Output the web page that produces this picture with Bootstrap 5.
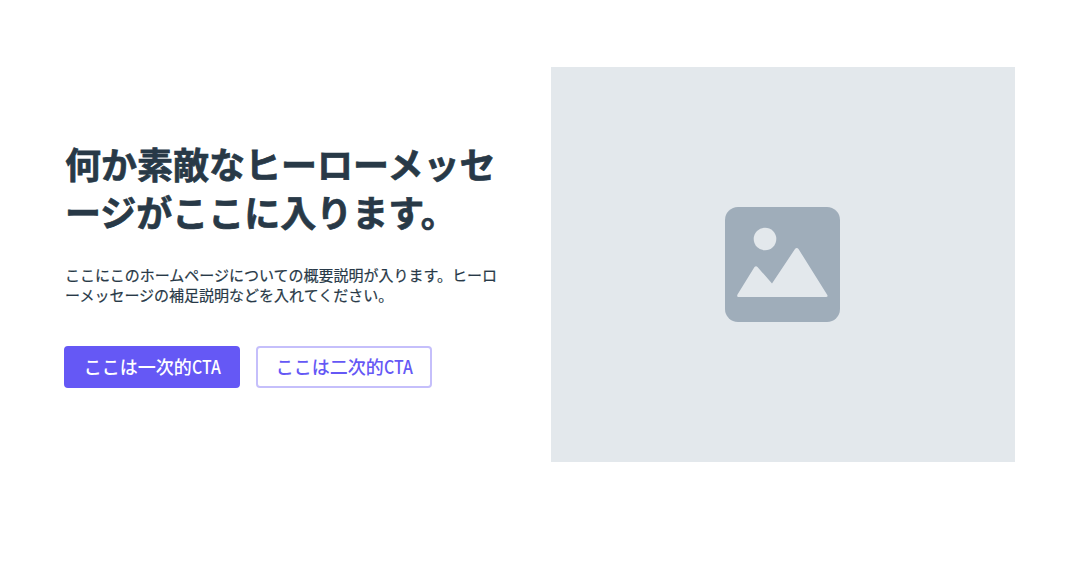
<!DOCTYPE html>
<html lang="ja">
<head>
  <meta charset="UTF-8" />
  <meta name="viewport" content="width=device-width, initial-scale=1.0"/>
  <title>ホーム</title>
  <link href="https://cdn.jsdelivr.net/npm/bootstrap@5.3.0/dist/css/bootstrap.min.css" rel="stylesheet">
  <style>
    body {
      font-family: "Noto Sans CJK JP", sans-serif;
      color: #283947;
    }
    .hero {
      padding: 67px 65px 0;
      gap: 54px;
    }
    .hero-copy {
      width: 432px;
      padding-top: 72px;
    }
    .hero-title {
      font-size: 36px;
      line-height: 48px;
      margin-bottom: 30px;
      -webkit-text-stroke: 0.7px currentColor;
    }
    .hero-text {
      font-size: 15px;
      line-height: 20px;
      margin-bottom: 41px;
      -webkit-text-stroke: 0.2px currentColor;
    }
    .hero-actions {
      margin-left: -1px;
    }
    .btn-cta {
      --bs-btn-border-width: 2px;
      --bs-btn-border-radius: 4px;
      width: 176px;
      height: 42px;
      padding-bottom: 8px;
      font-size: 18px;
      line-height: 22px;
      font-weight: 500;
    }
    .btn-cta-main {
      --bs-btn-color: #fff;
      --bs-btn-bg: #6558f5;
      --bs-btn-border-color: #6558f5;
    }
    .btn-cta-sub {
      --bs-btn-color: #6558f5;
      --bs-btn-border-color: #c5bffb;
    }
    /* narrower latin letters beside the kanji */
    .latin {
      display: inline-block;
      margin-right: -4px;
      transform: scaleX(0.88);
      transform-origin: left;
    }
    .hero-image {
      width: 464px;
      height: 395px;
      padding-right: 1px;
      background: #e3e8ec;
    }
  </style>
</head>
<body>
  <main class="hero d-flex align-items-start">
    <div class="hero-copy flex-shrink-0">
      <h1 class="hero-title fw-bold">何か素敵なヒーローメッセ<br>ージがここに入ります。</h1>
      <p class="hero-text">ここにこのホームページについての概要説明が入ります。ヒーロ<br>ーメッセージの補足説明などを入れてください。</p>
      <div class="hero-actions d-flex gap-3">
        <button type="button" class="btn btn-cta btn-cta-main px-0">ここは一次的<span class="latin">CTA</span></button>
        <button type="button" class="btn btn-cta btn-cta-sub px-0">ここは二次的<span class="latin">CTA</span></button>
      </div>
    </div>
    <div class="hero-image d-flex align-items-center justify-content-center flex-shrink-0">
      <svg width="115" height="115" viewBox="0 0 115 115" aria-hidden="true">
        <rect width="115" height="115" rx="13" fill="#9fadba"/>
        <circle cx="40" cy="32" r="11.3" fill="#e3e8ec"/>
        <path d="M13.500 90 Q11.500 90 12.500 87.500 L29.500 60 Q31 58.500 32.500 60 L47 76.500 L70 42 Q71.800 40 73.500 42 L102 87.500 Q103.500 90 101 90 Z" fill="#e3e8ec"/>
      </svg>
    </div>
  </main>

  <script src="https://cdn.jsdelivr.net/npm/bootstrap@5.3.0/dist/js/bootstrap.bundle.min.js"></script>
</body>
</html>
